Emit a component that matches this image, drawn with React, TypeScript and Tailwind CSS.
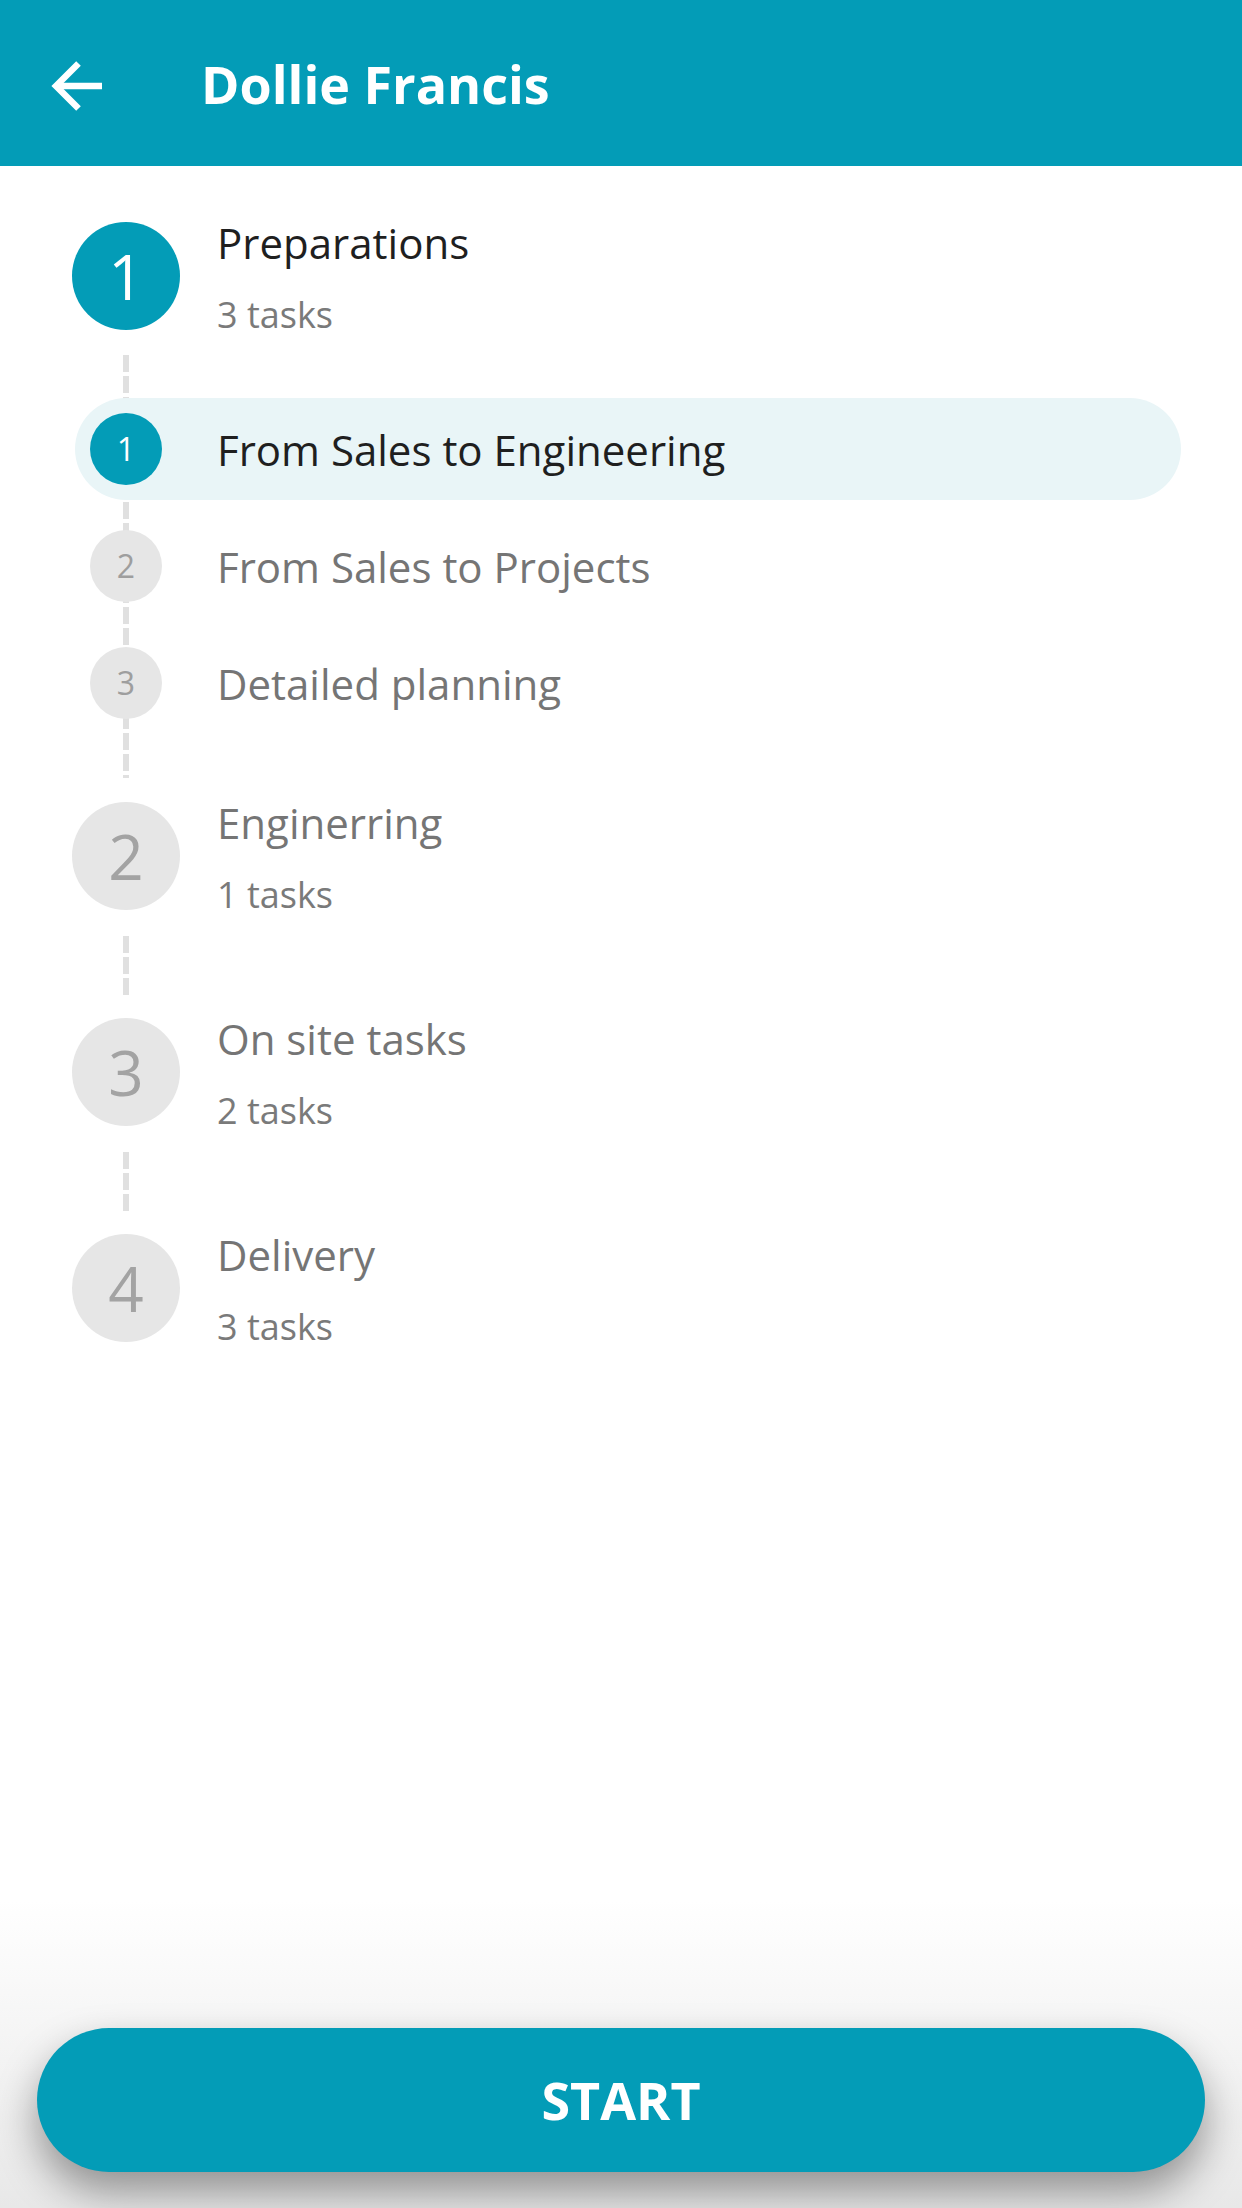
import React from "react";

type Sub = { n: number; label: string; active?: boolean };

const dash =
  "bg-[image:repeating-linear-gradient(to_bottom,#e0e0e0_0px,#e0e0e0_17px,transparent_17px,transparent_21px)]";

function StepRow({
  n,
  title,
  sub,
  active,
}: {
  n: number;
  title: string;
  sub: string;
  active?: boolean;
}) {
  return (
    <div className="flex items-start h-[108px]">
      <div
        className={
          active
            ? "w-[108px] h-[108px] shrink-0 rounded-full bg-[#039cb7] flex items-center justify-center text-white"
            : "w-[108px] h-[108px] shrink-0 rounded-full bg-[#e6e6e6] flex items-center justify-center text-[#a3a3a3]"
        }
      >
        <span className="text-[62px] font-normal leading-none">{n}</span>
      </div>
      <div className="ml-[37px] -mt-[8px]">
        <div
          className={
            active
              ? "text-[42px] leading-[57px] text-[#1f1f1f]"
              : "text-[42px] leading-[57px] text-[#757575]"
          }
        >
          {title}
        </div>
        <div className="text-[36px] leading-[49px] mt-[19px] text-[#7a7a7a]">{sub}</div>
      </div>
    </div>
  );
}

function Connector() {
  return (
    <div className="h-[108px] pt-[26px]">
      <div className={`ml-[51px] w-[6px] h-[59px] ${dash}`} />
    </div>
  );
}

function SubRow({ n, label, active }: Sub) {
  return (
    <div
      className={
        active
          ? "relative z-10 h-[102px] flex items-center px-[15px] rounded-full bg-[#e9f5f7]"
          : "relative z-10 h-[102px] flex items-center px-[15px] rounded-full"
      }
    >
      <div
        className={
          active
            ? "w-[72px] h-[72px] shrink-0 rounded-full bg-[#039cb7] flex items-center justify-center text-white"
            : "w-[72px] h-[72px] shrink-0 rounded-full bg-[#e6e6e6] flex items-center justify-center text-[#9e9e9e]"
        }
      >
        <span className="text-[32px] leading-none">{n}</span>
      </div>
      <span
        className={
          active
            ? "ml-[55px] text-[42px] leading-[57px] text-[#1f1f1f]"
            : "ml-[55px] text-[42px] leading-[57px] text-[#757575]"
        }
      >
        {label}
      </span>
    </div>
  );
}

export default function App() {
  const subs: Sub[] = [
    { n: 1, label: "From Sales to Engineering", active: true },
    { n: 2, label: "From Sales to Projects" },
    { n: 3, label: "Detailed planning" },
  ];
  return (
    <div className="w-[1242px] h-[2208px] flex flex-col bg-white overflow-hidden font-['Open_Sans','Noto_Sans',sans-serif]">
      <header className="h-[166px] shrink-0 bg-[#039cb7] flex items-center pl-[50px]">
        <svg
          className="w-[60px] h-[60px] mt-[6px] shrink-0"
          viewBox="0 0 60 60"
          fill="none"
          stroke="white"
          strokeWidth="6.5"
        >
          <path d="M7 30H52" strokeLinecap="butt" />
          <path d="M28.5 7.5 6 30 28.5 52.5" strokeLinecap="butt" strokeLinejoin="miter" />
        </svg>
        <h1 className="ml-[91px] text-white font-bold text-[52px] leading-[71px]">Dollie Francis</h1>
      </header>

      <main className="flex-1 pl-[72px] pt-[56px]">
        <StepRow n={1} title="Preparations" sub="3 tasks" active />
        <div className="relative ml-[3px] mr-[61px] py-[68px] flex flex-col gap-[15px]">
          <div className={`absolute left-[48px] top-[25px] bottom-[24px] w-[6px] ${dash}`} />
          {subs.map((s) => (
            <SubRow key={s.n} {...s} />
          ))}
        </div>
        <StepRow n={2} title="Enginerring" sub="1 tasks" />
        <Connector />
        <StepRow n={3} title="On site tasks" sub="2 tasks" />
        <Connector />
        <StepRow n={4} title="Delivery" sub="3 tasks" />
      </main>

      <footer className="shrink-0 px-[37px] pt-[128px] pb-[36px] bg-linear-to-b from-white to-[#e8e8e8]">
        <button className="w-full h-[144px] rounded-full bg-[#039cb7] text-white font-bold text-[52px] leading-none shadow-[0_20px_40px_rgba(0,0,0,0.38)]">
          START
        </button>
      </footer>
    </div>
  );
}
